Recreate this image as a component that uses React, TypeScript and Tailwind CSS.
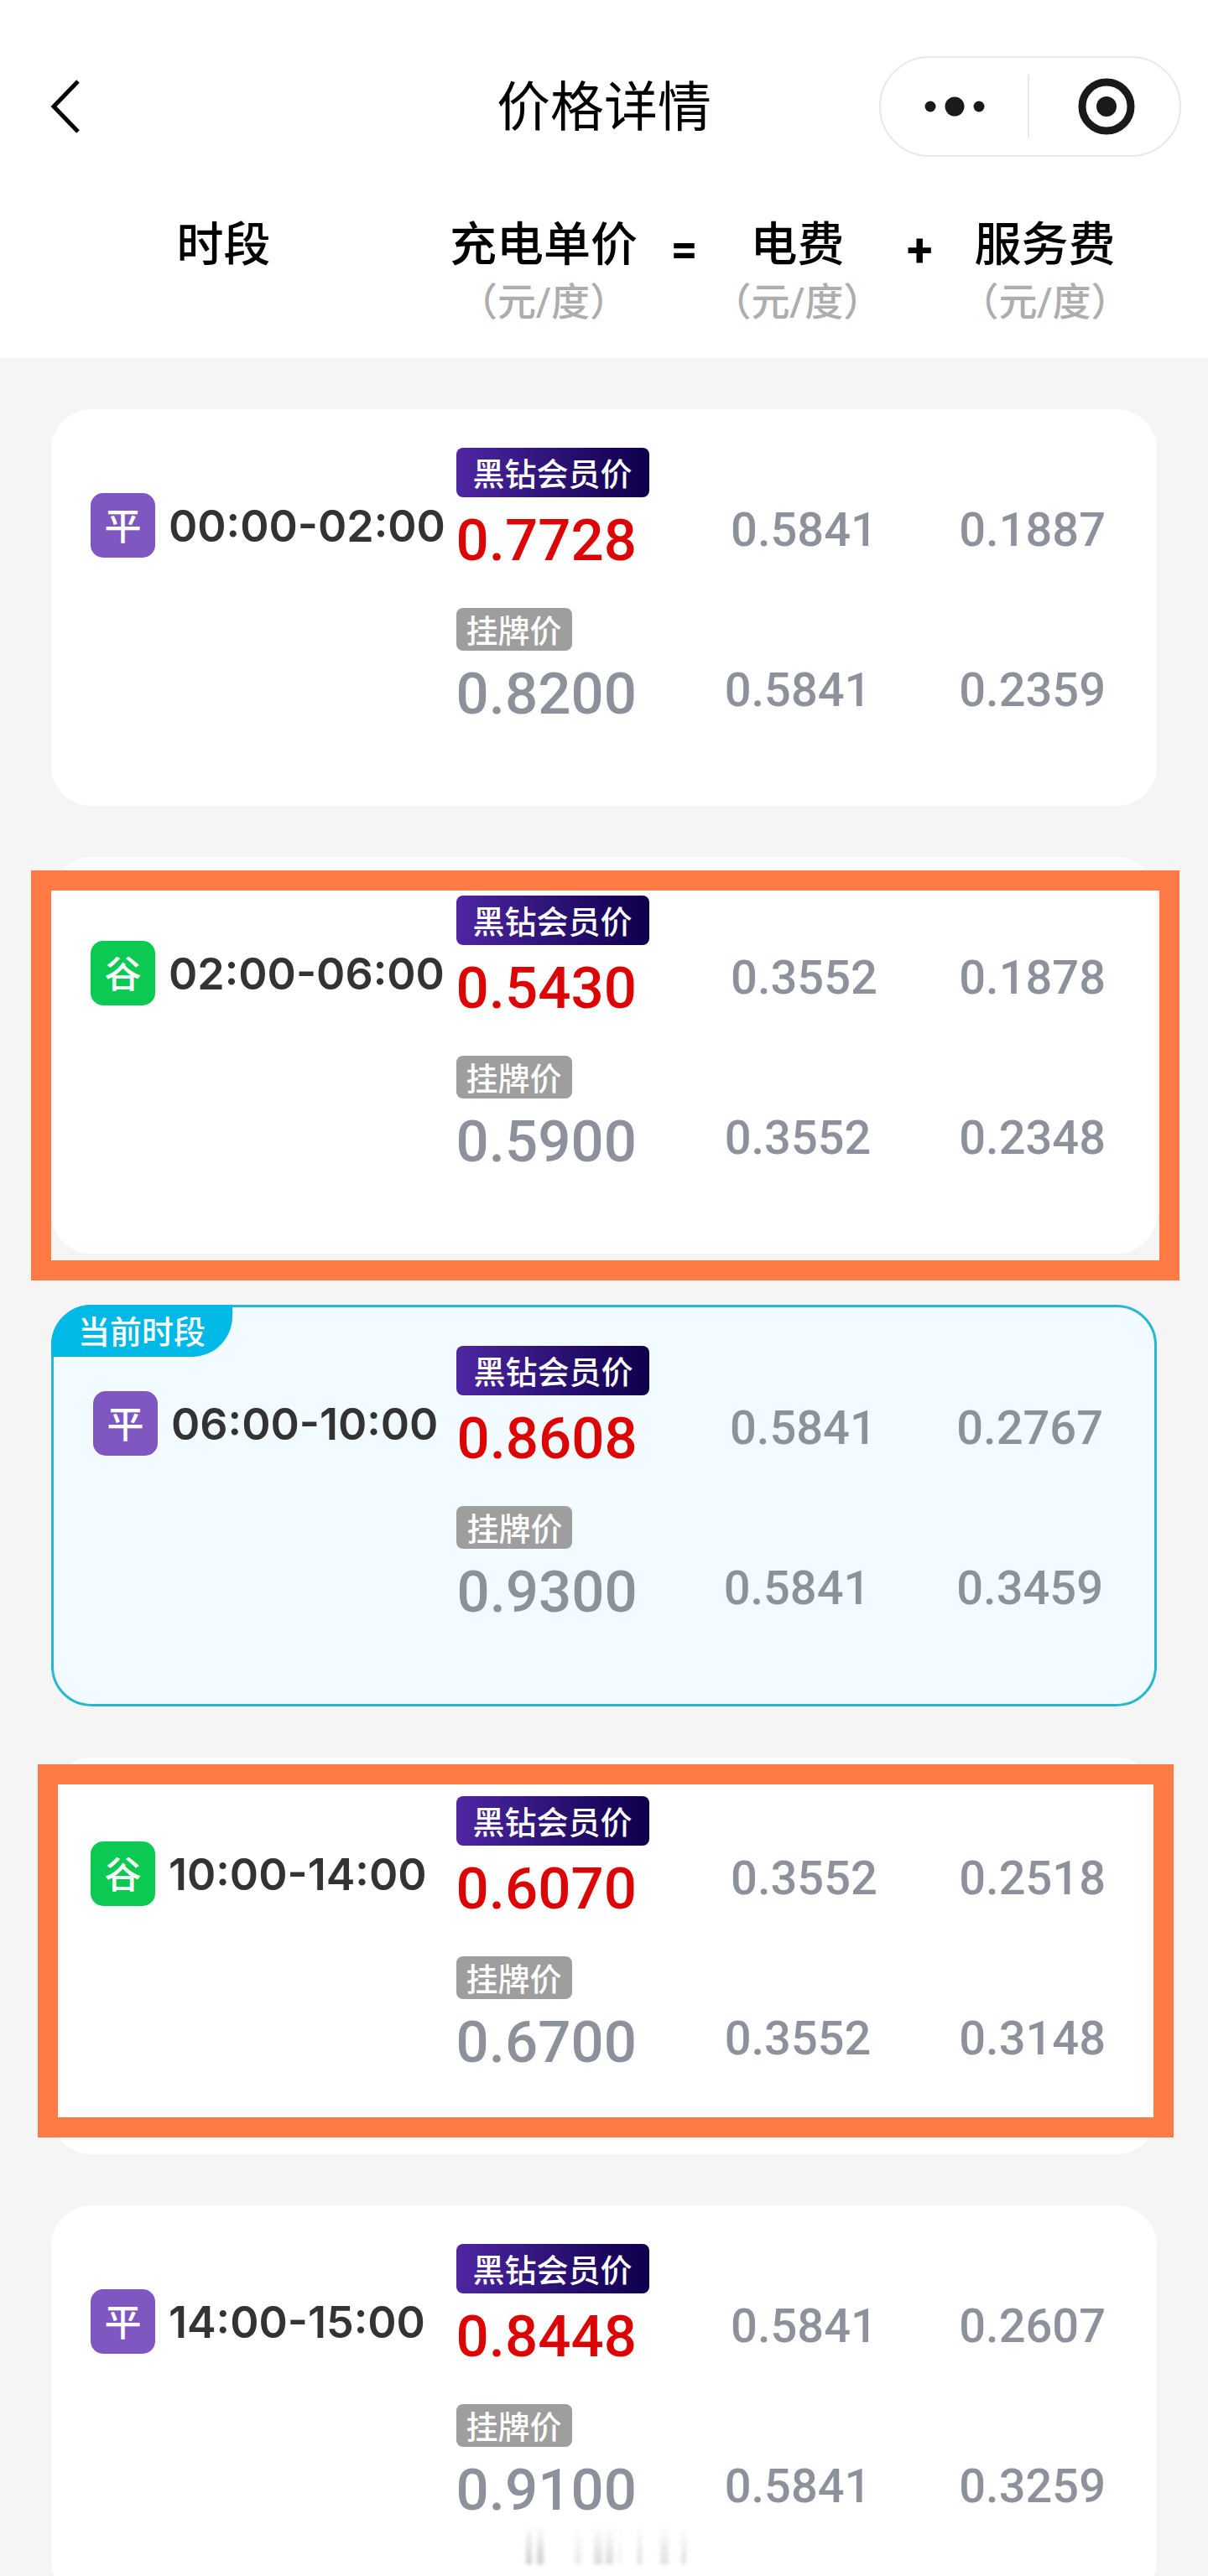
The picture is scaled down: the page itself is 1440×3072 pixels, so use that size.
import React from 'react'

interface Price {
  total: string
  power: string
  service: string
}

interface Period {
  time: string
  level: '平' | '谷'
  current?: boolean
  // frame drawn around the cheap periods
  frame?: string
  member: Price
  listed: Price
}

const periods: Period[] = [
  {
    time: '00:00-02:00',
    level: '平',
    member: { total: '0.7728', power: '0.5841', service: '0.1887' },
    listed: { total: '0.8200', power: '0.5841', service: '0.2359' },
  },
  {
    time: '02:00-06:00',
    level: '谷',
    frame: '-left-6 -right-[27px] top-4 -bottom-8',
    member: { total: '0.5430', power: '0.3552', service: '0.1878' },
    listed: { total: '0.5900', power: '0.3552', service: '0.2348' },
  },
  {
    time: '06:00-10:00',
    level: '平',
    current: true,
    member: { total: '0.8608', power: '0.5841', service: '0.2767' },
    listed: { total: '0.9300', power: '0.5841', service: '0.3459' },
  },
  {
    time: '10:00-14:00',
    level: '谷',
    frame: '-left-4 -right-5 top-2 bottom-5',
    member: { total: '0.6070', power: '0.3552', service: '0.2518' },
    listed: { total: '0.6700', power: '0.3552', service: '0.3148' },
  },
  {
    time: '14:00-15:00',
    level: '平',
    member: { total: '0.8448', power: '0.5841', service: '0.2607' },
    listed: { total: '0.9100', power: '0.5841', service: '0.3259' },
  },
]

const App: React.FC = () => {
  return (
    <div className="h-screen overflow-hidden bg-[#f5f5f5] font-['Roboto','Noto_Sans_CJK_SC',sans-serif]">
      <header className="bg-white pt-[67px] pb-[41px]">
        <NavBar />
        <ColumnHeads />
      </header>

      {/* Price cards */}
      <main className="flex flex-col gap-[61px] px-[61px] pt-[61px]">
        {periods.map((period) => (
          <PeriodCard key={period.time} period={period} />
        ))}
      </main>

      {/* Faded mark at the bottom edge */}
      <svg className="absolute bottom-[14px] left-[43%] blur-[2px]" width="200" height="46" viewBox="0 0 200 46" aria-hidden="true">
        <defs>
          <linearGradient id="fade" x1="0" y1="0" x2="0" y2="1">
            <stop offset="0" stopColor="#999" stopOpacity="0" />
            <stop offset="1" stopColor="#999" stopOpacity="0.5" />
          </linearGradient>
        </defs>
        <g fill="url(#fade)">
          <rect x="8" y="0" width="7" height="46" />
          <rect x="21" y="0" width="8" height="46" />
          <rect x="66" y="0" width="8" height="46" opacity="0.4" />
          <rect x="89" y="0" width="10" height="46" opacity="0.7" />
          <rect x="103" y="0" width="9" height="46" opacity="0.7" />
          <rect x="118" y="0" width="4" height="46" opacity="0.3" />
          <rect x="141" y="0" width="5" height="46" opacity="0.7" />
          <rect x="168" y="0" width="10" height="46" opacity="0.6" />
          <rect x="193" y="0" width="6" height="46" opacity="0.6" />
        </g>
      </svg>
    </div>
  )
}

const NavBar: React.FC = () => (
  <nav className="grid h-[120px] grid-cols-[1fr_auto_1fr] items-center px-8">
    <button type="button" aria-label="返回" className="justify-self-start pl-7">
      <svg width="38" height="64" viewBox="0 0 38 64" fill="none" stroke="#000" strokeWidth="5">
        <path d="M33 2 4 32l29 30" />
      </svg>
    </button>
    <h1 className="pt-1 text-[64px] leading-none">价格详情</h1>
    <div className="flex h-[120px] w-[360px] items-center justify-self-end rounded-full border-2 border-[#e8e8e8]">
      <button type="button" aria-label="更多" className="flex flex-1 justify-center">
        <svg width="72" height="24" viewBox="0 0 72 24" fill="#1a1a1a">
          <circle cx="7" cy="12" r="6.5" />
          <circle cx="36" cy="12" r="11.5" />
          <circle cx="65" cy="12" r="6.5" />
        </svg>
      </button>
      <span className="h-[76px] w-0.5 bg-[#e8e8e8]" />
      <button type="button" aria-label="关闭" className="flex flex-1 justify-center pl-1">
        <svg width="68" height="68" viewBox="0 0 68 68" fill="none">
          <circle cx="34" cy="34" r="29" stroke="#1a1a1a" strokeWidth="9" />
          <circle cx="34" cy="34" r="12" fill="#1a1a1a" />
        </svg>
      </button>
    </div>
  </nav>
)

const ColumnHeads: React.FC = () => (
  <div className="mt-[73px] grid grid-cols-[37%_16%_7%_12%_8%_13%] text-[56px] leading-[64px] font-medium">
    <ColumnHead title="时段" />
    <ColumnHead title="充电单价" unit="（元/度）" />
    <span className="mt-1.5 pl-1 text-center font-bold">=</span>
    <ColumnHead title="电费" unit="（元/度）" />
    <span className="mt-1.5 pl-1 text-center font-bold">+</span>
    <ColumnHead title="服务费" unit="（元/度）" />
  </div>
)

interface ColumnHeadProps {
  title: string
  unit?: string
}

const ColumnHead: React.FC<ColumnHeadProps> = ({ title, unit }) => (
  <div className="flex flex-col items-center gap-2.5 whitespace-nowrap">
    <span>{title}</span>
    {unit && <span className="text-[46px] leading-[52px] text-[#adadad]">{unit}</span>}
  </div>
)

const PeriodCard: React.FC<{ period: Period }> = ({ period }) => {
  const { time, level, current, frame, member, listed } = period

  return (
    <section
      className={
        current
          ? 'relative rounded-[48px] border-3 border-[#28b6d0] bg-[#f2fbff]'
          : 'relative rounded-[48px] bg-white'
      }
    >
      {current && (
        <span className="absolute -top-[3px] -left-[3px] flex h-[62px] items-center rounded-tl-[48px] rounded-br-[48px] bg-[#00b9e6] px-8 pt-1 text-[38px] leading-none font-medium text-white">
          当前时段
        </span>
      )}

      <div className="flex pt-[46px] pr-[61px] pb-[97px] pl-[47px]">
        <div className="flex w-[36%] shrink-0 items-start pt-[54px]">
          <div className="flex items-center gap-4">
            <span
              className={
                level === '平'
                  ? 'flex size-[77px] items-center justify-center rounded-[15px] bg-[#7e57c0] pt-1 text-[44px] leading-none font-medium text-white'
                  : 'flex size-[77px] items-center justify-center rounded-[15px] bg-[#0cc953] pt-1 text-[44px] leading-none font-medium text-white'
              }
            >
              {level}
            </span>
            <span className="pt-0.5 font-['Inter',sans-serif] text-[52px] leading-none font-semibold whitespace-nowrap text-[#333]">
              {time}
            </span>
          </div>
        </div>

        <div className="flex flex-1 flex-col gap-11">
          <PriceRow price={member} member />
          <PriceRow price={listed} />
        </div>
      </div>

      {frame && <div className={`absolute border-[24px] border-[#ff7a45] ${frame}`} />}
    </section>
  )
}

interface PriceRowProps {
  price: Price
  member?: boolean
}

const PriceRow: React.FC<PriceRowProps> = ({ price, member }) => (
  <div className="flex items-start justify-between">
    <div className="flex flex-col items-start gap-4">
      {member ? (
        <span className="flex h-[59px] items-center rounded-lg bg-linear-to-r from-[#4f26a3] to-[#0e004c] px-5 pt-1 text-[38px] leading-none font-medium text-white">
          黑钻会员价
        </span>
      ) : (
        <span className="flex h-[51px] items-center rounded-lg bg-[#9e9e9e] px-3 pt-1 text-[38px] leading-none font-medium text-white">
          挂牌价
        </span>
      )}
      <span
        className={
          member
            ? 'text-[69px] leading-[72px] font-medium text-[#dc0505]'
            : 'text-[69px] leading-[72px] font-medium text-[#8d919b]'
        }
      >
        {price.total}
      </span>
    </div>
    <span className="mt-16 text-[56px] leading-[68px] font-medium text-[#8d919b]">{price.power}</span>
    <span className="mt-16 text-[56px] leading-[68px] font-medium text-[#8d919b]">{price.service}</span>
  </div>
)

export default App
